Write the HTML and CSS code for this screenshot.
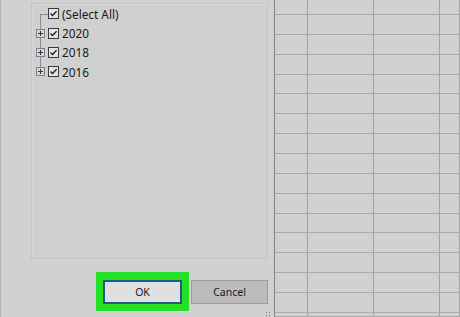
FILE: index.html
```html
<!DOCTYPE html>
<html>
<head>
<meta charset="utf-8">
<link rel="stylesheet" href="styles.css">
</head>
<body>
<div class="dialog">
  <div class="listbox">
    <div class="row first">
      <span class="gutter"></span>
      <svg class="check" width="11" height="11" viewBox="0 0 11 11"><rect x="0.5" y="0.5" width="10" height="10" fill="#e4e4e4" stroke="#3a3a3a"/><path d="M2.5 5.6 L4.5 7.6 L8.6 3.2" fill="none" stroke="#222" stroke-width="1.4"/></svg>
      <span class="label">(Select All)</span>
    </div>
    <div class="row mid">
      <span class="gutter"><svg class="plus" width="9" height="9" viewBox="0 0 9 9"><rect x="0.5" y="0.5" width="8" height="8" fill="#d6d6d6" stroke="#7c7f90"/><path d="M2 4.5 H7 M4.5 2 V7" stroke="#333" stroke-width="1"/></svg></span>
      <svg class="check" width="11" height="11" viewBox="0 0 11 11"><rect x="0.5" y="0.5" width="10" height="10" fill="#e4e4e4" stroke="#3a3a3a"/><path d="M2.5 5.6 L4.5 7.6 L8.6 3.2" fill="none" stroke="#222" stroke-width="1.4"/></svg>
      <span class="label">2020</span>
    </div>
    <div class="row mid">
      <span class="gutter"><svg class="plus" width="9" height="9" viewBox="0 0 9 9"><rect x="0.5" y="0.5" width="8" height="8" fill="#d6d6d6" stroke="#7c7f90"/><path d="M2 4.5 H7 M4.5 2 V7" stroke="#333" stroke-width="1"/></svg></span>
      <svg class="check" width="11" height="11" viewBox="0 0 11 11"><rect x="0.5" y="0.5" width="10" height="10" fill="#e4e4e4" stroke="#3a3a3a"/><path d="M2.5 5.6 L4.5 7.6 L8.6 3.2" fill="none" stroke="#222" stroke-width="1.4"/></svg>
      <span class="label">2018</span>
    </div>
    <div class="row last">
      <span class="gutter"><svg class="plus" width="9" height="9" viewBox="0 0 9 9"><rect x="0.5" y="0.5" width="8" height="8" fill="#d6d6d6" stroke="#7c7f90"/><path d="M2 4.5 H7 M4.5 2 V7" stroke="#333" stroke-width="1"/></svg></span>
      <svg class="check" width="11" height="11" viewBox="0 0 11 11"><rect x="0.5" y="0.5" width="10" height="10" fill="#e4e4e4" stroke="#3a3a3a"/><path d="M2.5 5.6 L4.5 7.6 L8.6 3.2" fill="none" stroke="#222" stroke-width="1.4"/></svg>
      <span class="label">2016</span>
    </div>
  </div>
  <div class="buttons">
    <div class="highlight"><button class="btn ok">OK</button></div>
    <button class="btn cancel">Cancel</button>
  </div>
  <div class="grip"></div>
</div>
<div class="sheet">
  <div class="c"></div><div class="c"></div><div class="c"></div><div class="c"></div>
  <div class="c"></div><div class="c"></div><div class="c"></div><div class="c"></div>
  <div class="c"></div><div class="c"></div><div class="c"></div><div class="c"></div>
  <div class="c"></div><div class="c"></div><div class="c"></div><div class="c"></div>
  <div class="c"></div><div class="c"></div><div class="c"></div><div class="c"></div>
  <div class="c"></div><div class="c"></div><div class="c"></div><div class="c"></div>
  <div class="c"></div><div class="c"></div><div class="c"></div><div class="c"></div>
  <div class="c"></div><div class="c"></div><div class="c"></div><div class="c"></div>
  <div class="c"></div><div class="c"></div><div class="c"></div><div class="c"></div>
  <div class="c"></div><div class="c"></div><div class="c"></div><div class="c"></div>
  <div class="c"></div><div class="c"></div><div class="c"></div><div class="c"></div>
  <div class="c"></div><div class="c"></div><div class="c"></div><div class="c"></div>
  <div class="c"></div><div class="c"></div><div class="c"></div><div class="c"></div>
  <div class="c"></div><div class="c"></div><div class="c"></div><div class="c"></div>
  <div class="c"></div><div class="c"></div><div class="c"></div><div class="c"></div>
  <div class="c"></div><div class="c"></div><div class="c"></div><div class="c"></div>
  <div class="c"></div><div class="c"></div><div class="c"></div><div class="c"></div>
</div>
</body>
</html>
```
FILE: styles.css
```css
* { box-sizing: border-box; }
html, body { margin: 0; padding: 0; }
body {
  width: 460px;
  height: 317px;
  overflow: hidden;
  background: #d1d1d1;
  display: flex;
  font-family: "Noto Sans", sans-serif;
  color: #1a1a1a;
}
.dialog {
  position: relative;
  width: 274px;
  flex: none;
  border-left: 1px solid #b3b3b3;
  padding: 3px 6px 0 30px;
  display: flex;
  flex-direction: column;
  background: #d1d1d1;
}
.listbox {
  height: 256px;
  border: 1px solid #c3c3c3;
  box-shadow: inset 1px 1px 0 #d8d8d8;
  padding: 0 0 0 4px;
  background: #d0d0d0;
}
.row {
  height: 19.4px;
  display: flex;
  align-items: center;
}
.gutter {
  position: relative;
  width: 12px;
  height: 100%;
  flex: none;
  display: flex;
  align-items: center;
}
.gutter::before {
  content: "";
  position: absolute;
  left: 4px;
  width: 1px;
  background: #8c8c8c;
}
.first .gutter::before { top: 50%; bottom: 0; }
.mid .gutter::before { top: 0; bottom: 0; }
.last .gutter::before { top: 0; bottom: 50%; }
.first .gutter::after {
  content: "";
  position: absolute;
  left: 4px;
  right: 0;
  top: 50%;
  height: 1px;
  background: #8c8c8c;
}
.plus { position: relative; z-index: 1; display: block; }
.check { display: block; flex: none; }
.label {
  margin-left: 3px;
  font-size: 11.8px;
  line-height: 14px;
}
.buttons {
  margin-top: 13px;
  display: flex;
  justify-content: flex-end;
  align-items: flex-start;
  gap: 2px;
}
.highlight {
  background: #25e125;
  padding: 8px 7px 7px 7px;
}
.btn {
  display: block;
  height: 24px;
  font-family: "Noto Sans", sans-serif;
  font-size: 10.5px;
  color: #1a1a1a;
  padding: 0;
  margin: 0;
}
.ok {
  width: 79px;
  background: #e0e0e0;
  border: 2px solid #245a80;
  box-shadow: inset 0 0 0 1px #d8e4ea;
}
.cancel {
  width: 77px;
  margin-top: 8px;
  background: #bcbcbc;
  border: 1px solid #9c9c9c;
}
.grip {
  position: absolute;
  right: 3px;
  bottom: 0;
  width: 6px;
  height: 6px;
  background:
    radial-gradient(circle, #777 0.8px, transparent 1px) 0 0 / 3px 3px;
}
.sheet {
  flex: 1;
  height: 317px;
  border-left: 1px solid #828282;
  display: grid;
  grid-template-columns: 33px 66px 66px 1fr;
  grid-template-rows: 15px repeat(15, 19.87px) 1fr;
  background: #d1d1d1;
}
.c {
  border-right: 1px solid #a2a2a2;
  border-bottom: 1px solid #ababab;
}
```
